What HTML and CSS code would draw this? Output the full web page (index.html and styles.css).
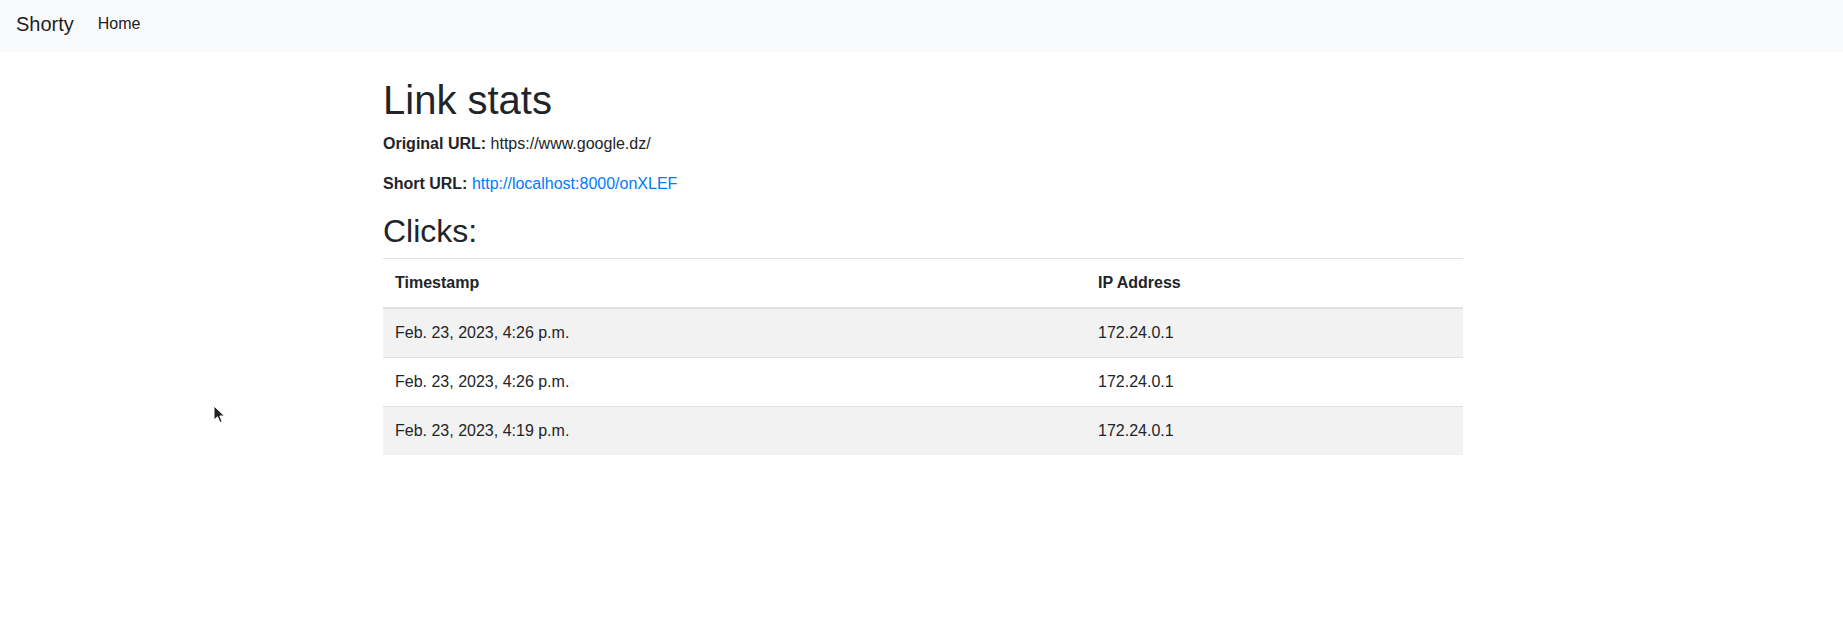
FILE: index.html
```html
<!DOCTYPE html>
<html lang="en">
  <head>
    <meta charset="UTF-8" />
    <meta name="viewport" content="width=device-width, initial-scale=1.0" />
    <title>Shorty - Link stats</title>
    <link rel="stylesheet" href="styles.css">
  </head>
  <body>
    <nav class="navbar">
      <a class="navbar-brand" href="#">Shorty</a>
      <a class="nav-link" href="#">Home</a>
    </nav>

    <div class="container">
      <h1>Link stats</h1>
      <p><strong>Original URL:</strong> https://www.google.dz/</p>
      <p><strong>Short URL:</strong> <a href="#">http://localhost:8000/onXLEF</a></p>

      <h2>Clicks:</h2>
      <table class="table">
        <thead>
          <tr>
            <th class="col-time">Timestamp</th>
            <th>IP Address</th>
          </tr>
        </thead>
        <tbody>
          <tr>
            <td>Feb. 23, 2023, 4:26 p.m.</td>
            <td>172.24.0.1</td>
          </tr>
          <tr>
            <td>Feb. 23, 2023, 4:26 p.m.</td>
            <td>172.24.0.1</td>
          </tr>
          <tr>
            <td>Feb. 23, 2023, 4:19 p.m.</td>
            <td>172.24.0.1</td>
          </tr>
        </tbody>
      </table>
    </div>

    <!-- mouse pointer captured in the screenshot -->
    <svg class="cursor" width="13" height="19" viewBox="0 0 13 19">
      <path d="M1 1 L1 15 L4.5 11.8 L7 17.5 L9.2 16.5 L6.8 11 L11.5 11 Z" fill="#222" stroke="#fff" stroke-width="1"/>
    </svg>
  </body>
</html>
```

FILE: styles.css
```css
/* General page styling */
body {
  font-family: "Liberation Sans", Arial, sans-serif;
  font-size: 16px;
  line-height: 1.5;
  color: #212529;
  background-color: #fff;
  margin: 0;
  padding: 0;
}

a {
  color: #007bff;
  text-decoration: none;
}

/* Navbar */
.navbar {
  display: flex;
  align-items: flex-start;
  height: 52px;
  padding: 4px 16px 0;
  background-color: #f8f9fa;
  box-sizing: border-box;
}

.navbar-brand {
  font-size: 20px;
  line-height: 30px;
  padding: 5px 0;
  margin-right: 16px;
  color: rgba(0, 0, 0, 0.9);
}

.nav-link {
  padding: 8px;
  line-height: 24px;
  color: rgba(0, 0, 0, 0.9);
}

/* Content */
.container {
  max-width: 1113px;
  margin: 24px auto 0;
  padding: 0 15px 0 18px;
  box-sizing: border-box;
}

h1,
h2 {
  font-weight: 400;
  line-height: 1.2;
  margin: 0 0 8px;
}

h1 {
  font-size: 40px;
}

h2 {
  font-size: 32px;
}

p {
  margin: 0 0 16px;
}

strong {
  font-weight: 700;
}

/* Table */
.table {
  width: 100%;
  border-collapse: collapse;
  margin-bottom: 16px;
}

.table th,
.table td {
  padding: 12px;
  text-align: left;
  vertical-align: top;
  border-top: 1px solid #dee2e6;
}

.table th {
  font-weight: 700;
}

.table thead th {
  border-bottom: 2px solid #dee2e6;
}

.table .col-time {
  width: 679px;
}

.table tbody tr:nth-child(odd) {
  background-color: rgba(0, 0, 0, 0.05);
}

.cursor {
  position: absolute;
  left: 213px;
  top: 405px;
}
```
